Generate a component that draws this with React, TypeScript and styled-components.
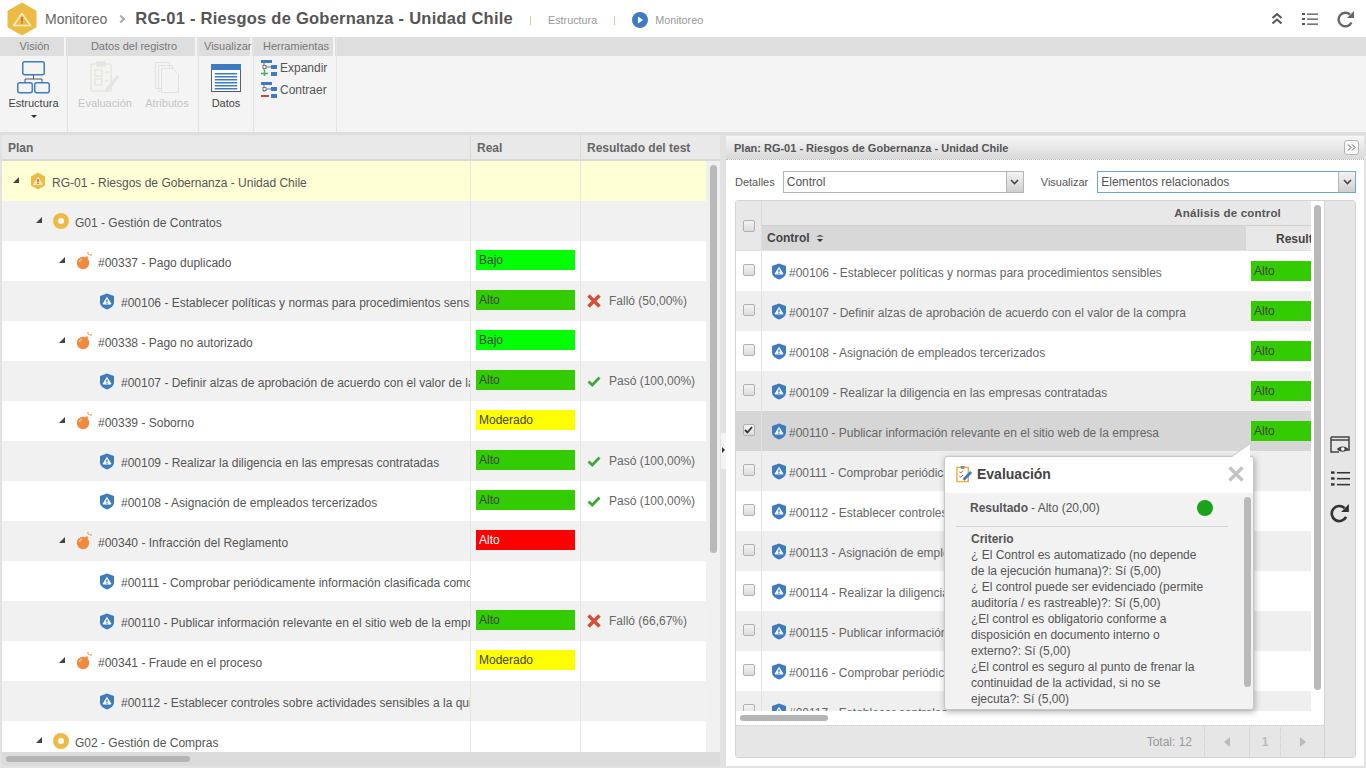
import styled, { createGlobalStyle } from 'styled-components';

const GlobalStyle = createGlobalStyle`
  html, body { margin: 0; padding: 0; }
  body {
    font-family: "Liberation Sans", Arial, sans-serif;
    font-size: 12px;
    color: #555;
    background: #fff;
  }
  * { box-sizing: border-box; }
`;

const Page = styled.div`
  width: 1366px;
  height: 768px;
  overflow: hidden;
  display: flex;
  flex-direction: column;
  position: relative;
`;

/* header */
const Header = styled.div`
  height: 37px;
  flex: none;
  display: flex;
  align-items: center;
  padding-left: 7px;
  background: #fff;
`;

const Crumb = styled.span`
  margin-left: 8px;
  font-size: 14px;
  color: #666;
`;

const Chevron = styled.span`
  margin: 0 11px 0 11px;
  width: 6px;
  height: 6px;
  border-top: 2px solid #aaa;
  border-right: 2px solid #aaa;
  transform: rotate(45deg);
`;

const Title = styled.h1`
  margin: 0;
  font-size: 16.5px;
  font-weight: 700;
  color: #555;
  letter-spacing: 0.25px;
`;

const Divider = styled.span`
  width: 1px;
  height: 9px;
  margin: 3px 0 0 17px;
  background: #d8c8a0;
`;

const StepLabel = styled.span`
  margin: 2px 0 0 17px;
  font-size: 10.8px;
  color: #999;
`;

const StepIcon = styled.svg`
  margin: 2px -10px 0 17px;
`;

const HeaderTools = styled.div`
  margin-left: auto;
  display: flex;
  align-items: center;
  gap: 19px;
  padding-right: 11px;
`;

/* ribbon */
const Ribbon = styled.div`
  height: 98px;
  flex: none;
  display: flex;
  background: linear-gradient(#dedede 0 19px, #f4f4f4 19px);
  border-bottom: 3px solid #dedede;
`;

const RibbonGroup = styled.div<{ $width: number }>`
  width: ${(p) => p.$width}px;
  flex: none;
  display: flex;
  flex-direction: column;
  border-right: 1px solid #e4e4e4;
`;

const GroupLabel = styled.div`
  height: 19px;
  margin-right: 1px;
  padding-left: 5px;
  line-height: 19px;
  font-size: 11px;
  text-align: center;
  color: #777;
  background: #dedede;
  border-right: 2px solid #f4f4f4;
  white-space: nowrap;
`;

const GroupBody = styled.div<{ $inset?: number }>`
  display: flex;
  flex: 1;
  padding-left: ${(p) => p.$inset ?? 0}px;
`;

const RibbonButton = styled.div<{ $disabled?: boolean }>`
  flex: 1;
  display: flex;
  flex-direction: column;
  align-items: center;
  padding-top: 4px;
  font-size: 11px;
  line-height: 14px;
  color: ${(p) => (p.$disabled ? '#c4c4c4' : '#444')};
`;

const ButtonIcon = styled.span`
  height: 35px;
  margin-bottom: 1px;
  display: flex;
  align-items: center;
  justify-content: center;
`;

const Caret = styled.span`
  margin-top: 5px;
  border-left: 3px solid transparent;
  border-right: 3px solid transparent;
  border-top: 3px solid #333;
`;

const ToolList = styled.div`
  display: flex;
  flex-direction: column;
  gap: 6px;
  padding: 4px 0 0 7px;
`;

const ToolItem = styled.div`
  display: flex;
  align-items: center;
  gap: 3px;
  height: 16px;
  font-size: 12px;
  color: #555;
`;

/* main area */
const Main = styled.div`
  flex: 1;
  min-height: 0;
  display: flex;
  background: #e2e2e2;
  padding: 0 2px 2px;
`;

const LeftPanel = styled.section`
  width: 718px;
  flex: none;
  display: flex;
  flex-direction: column;
  background: #fff;
  position: relative;
  overflow: hidden;
`;

const PlanHead = styled.div`
  height: 26px;
  flex: none;
  display: grid;
  grid-template-columns: 468px 110px 1fr;
  background: #e9e9e9;
  border-bottom: 2px solid #d8d8d8;
  font-weight: 700;
  color: #666;
  line-height: 26px;
`;

const HeadCell = styled.div`
  padding-left: 6px;
  border-left: 1px solid #dcdcdc;
  &:first-child { border-left: 0; }
`;

const PlanBody = styled.div`
  flex: 1;
  min-height: 0;
  display: flex;
  overflow: hidden;
`;

const PlanRows = styled.div`
  width: 704px;
  flex: none;
`;

const PlanRow = styled.div<{ $tone: 'root' | 'odd' | 'even' }>`
  height: 40px;
  display: grid;
  grid-template-columns: 468px 110px 1fr;
  background: ${(p) => (p.$tone === 'root' ? '#ffffd5' : p.$tone === 'odd' ? '#f1f1f1' : '#fff')};
`;

const TreeCell = styled.div<{ $level: number }>`
  display: flex;
  align-items: center;
  overflow: hidden;
  white-space: nowrap;
  padding-left: ${(p) => 11 + p.$level * 23}px;
  padding-top: 3px;
`;

const Toggle = styled.span<{ $leaf?: boolean }>`
  width: 17px;
  flex: none;
  height: 6px;
  margin-top: -5px;
  visibility: ${(p) => (p.$leaf ? 'hidden' : 'visible')};
  &::before {
    content: '';
    display: block;
    width: 0;
    height: 0;
    border-bottom: 6px solid #444;
    border-left: 6px solid transparent;
  }
`;

const NodeIcon = styled.span`
  width: 16px;
  flex: none;
  margin-right: 6px;
  display: flex;
  justify-content: center;
  margin-top: -3px;
`;

const RealCell = styled.div`
  border-left: 1px solid #e6e6e6;
  padding: 0 5px 2px;
  display: flex;
  align-items: center;
`;

const Level = styled.div<{ $color: string; $light?: boolean }>`
  width: 99px;
  height: 20px;
  padding-left: 3px;
  line-height: 20px;
  background: ${(p) => p.$color};
  color: ${(p) => (p.$light ? '#fff' : '#444')};
`;

const TestCell = styled.div`
  border-left: 1px solid #e6e6e6;
  display: flex;
  align-items: center;
  gap: 8px;
  padding-left: 6px;
  white-space: nowrap;
  color: #666;
`;

const Track = styled.div`
  flex: 1;
  background: #f0f0f0;
  padding: 4px 2px 0;
`;

const VThumb = styled.div<{ $height: number }>`
  width: 7px;
  height: ${(p) => p.$height}px;
  margin: 0 auto;
  border-radius: 4px;
  background: #b9b9b9;
`;

const HTrack = styled.div`
  height: 14px;
  flex: none;
  background: #dcdcdc;
  padding: 4px 4px;
`;

const HThumb = styled.div<{ $width: number }>`
  width: ${(p) => p.$width}px;
  height: 6px;
  border-radius: 3px;
  background: #b4b4b4;
`;

const Splitter = styled.div`
  width: 6px;
  flex: none;
  position: relative;
`;

const SplitHandle = styled.div`
  position: absolute;
  left: 1px;
  top: 298px;
  width: 5px;
  height: 36px;
  background: #f4f4f4;
  &::after {
    content: '';
    position: absolute;
    left: 1px;
    top: 14px;
    border-left: 3px solid #333;
    border-top: 3px solid transparent;
    border-bottom: 3px solid transparent;
  }
`;

const RightPanel = styled.section`
  flex: 1;
  display: flex;
  flex-direction: column;
  background: #fff;
  margin-top: 1px;
`;

const PanelTitle = styled.div`
  height: 24px;
  flex: none;
  display: flex;
  align-items: center;
  justify-content: space-between;
  padding: 0 5px 0 8px;
  font-size: 11px;
  font-weight: 700;
  color: #555;
  background: linear-gradient(#f6f6f6, #d9d9d9);
  border-bottom: 1px dotted #bbb;
`;

const CollapseBtn = styled.span`
  width: 15px;
  height: 15px;
  border: 1px solid #b5b5b5;
  border-radius: 3px;
  background: #fafafa;
  display: flex;
  align-items: center;
  justify-content: center;
`;

const Filters = styled.div`
  height: 40px;
  flex: none;
  display: flex;
  align-items: center;
  padding: 3px 0 0 9px;
  font-size: 11px;
  color: #555;
`;

const Select = styled.div<{ $width: number; $focus?: boolean }>`
  width: ${(p) => p.$width}px;
  height: 22px;
  margin-left: ${(p) => (p.$focus ? 9 : 8)}px;
  margin-right: ${(p) => (p.$focus ? 0 : 17)}px;
  display: flex;
  border: 1px solid ${(p) => (p.$focus ? '#6aa9d0' : '#b5b5b5')};
  font-size: 12px;
  color: #555;
`;

const SelectValue = styled.span`
  flex: 1;
  padding-left: 3px;
  line-height: 20px;
`;

const SelectArrow = styled.span`
  width: 17px;
  flex: none;
  border-left: 1px solid #b5b5b5;
  background: linear-gradient(#f4f4f4, #cfcfcf);
  display: flex;
  align-items: center;
  justify-content: center;
`;

const GridBox = styled.div`
  flex: 1;
  min-height: 0;
  margin: 0 8px 8px 9px;
  display: flex;
  border: 1px solid #d4d4d4;
  border-radius: 3px;
  overflow: hidden;
  position: relative;
`;

const GridMain = styled.div`
  width: 588px;
  flex: none;
  display: flex;
  flex-direction: column;
`;

const GridScrollArea = styled.div`
  flex: 1;
  min-height: 0;
  display: flex;
  overflow: hidden;
`;

const GridTable = styled.div`
  width: 575px;
  flex: none;
  overflow: hidden;
`;

const GridHead = styled.div`
  height: 50px;
  display: grid;
  grid-template-columns: 26px 1fr;
  background: #e8e8e8;
  border-bottom: 1px solid #e2e2e2;
`;

const HeadCheck = styled.div`
  display: flex;
  align-items: center;
  justify-content: center;
  border-right: 1px solid #dcdcdc;
`;

const GroupHead = styled.div`
  height: 24px;
  padding: 1px 53px 0 0;
  line-height: 22px;
  text-align: right;
  font-size: 11.5px;
  font-weight: 700;
  color: #555;
  letter-spacing: 0.2px;
`;

const ColumnHead = styled.div`
  height: 25px;
  display: flex;
  line-height: 26px;
  font-weight: 700;
  color: #444;
  background: #d8d8d8;
  border-top: 1px dotted #c8c8c8;
`;

const ControlHead = styled.div`
  width: 484px;
  padding-left: 5px;
  display: flex;
  align-items: center;
  gap: 6px;
`;

const ResultHead = styled.div`
  flex: 1;
  padding-left: 30px;
  background: #e8e8e8;
  overflow: hidden;
  white-space: nowrap;
`;

const GridRow = styled.div<{ $tone: 'even' | 'odd' | 'selected' }>`
  height: 40px;
  display: grid;
  grid-template-columns: 26px 484px 1fr;
  background: ${(p) => (p.$tone === 'selected' ? '#d6d6d6' : p.$tone === 'odd' ? '#efefef' : '#fff')};
`;

const CheckCell = styled.div`
  display: flex;
  align-items: center;
  justify-content: center;
  border-right: 1px solid #e2e2e2;
  padding-bottom: 3px;
`;

const CheckBox = styled.span`
  width: 12px;
  height: 12px;
  border: 1px solid #b0b0b0;
  border-radius: 2px;
  background: linear-gradient(#f4f4f4, #dcdcdc);
  display: flex;
  align-items: center;
  justify-content: center;
`;

const ControlCell = styled.div`
  display: flex;
  align-items: center;
  gap: 2px;
  padding: 3px 0 0 9px;
  white-space: nowrap;
  overflow: hidden;
  color: #666;
  svg { margin-top: -3px; }
`;

const ResultCell = styled.div`
  padding-top: 10px;
`;

const ResultBadge = styled.div`
  height: 20px;
  margin-left: 5px;
  padding-left: 3px;
  line-height: 20px;
  background: #33cc00;
  color: #444;
`;

const GridVTrack = styled.div`
  flex: 1;
  padding-top: 4px;
  display: flex;
  justify-content: center;
`;

const GridHTrack = styled.div`
  height: 14px;
  flex: none;
  padding: 4px 4px;
  background: #fff;
`;

const Footer = styled.div`
  height: 32px;
  flex: none;
  display: flex;
  align-items: center;
  justify-content: flex-end;
  background: #e6e6e6;
  border-top: 1px dotted #ccc;
  color: #999;
`;

const TotalText = styled.span`
  margin-right: 12px;
`;

const PagerCell = styled.span<{ $width: number }>`
  width: ${(p) => p.$width}px;
  height: 100%;
  display: flex;
  align-items: center;
  justify-content: center;
  border-left: 1px dotted #ccc;
  font-weight: 700;
  color: #bbb;
`;

const SideTools = styled.div`
  flex: 1;
  background: #e6e6e6;
  border-left: 1px solid #d4d4d4;
  display: flex;
  flex-direction: column;
  align-items: center;
  justify-content: flex-start;
  gap: 15px;
  padding-top: 235px;
`;

/* popover */
const Popover = styled.div`
  position: absolute;
  left: 208px;
  top: 255px;
  width: 310px;
  height: 254px;
  display: flex;
  flex-direction: column;
  background: #f2f2f2;
  border: 1px solid #c8c8c8;
  border-radius: 3px;
  box-shadow: 1px 2px 6px rgba(0, 0, 0, 0.3);
  &::before {
    content: '';
    position: absolute;
    right: 3px;
    top: -13px;
    width: 0;
    height: 0;
    border-bottom: 13px solid #fff;
    border-left: 18px solid transparent;
    filter: drop-shadow(0 -1px 0 #c4c4c4);
  }
`;

const PopoverHead = styled.div`
  height: 36px;
  flex: none;
  display: flex;
  align-items: center;
  gap: 4px;
  padding: 0 9px 2px 11px;
  background: #fff;
  border-radius: 3px 3px 0 0;
  font-size: 14px;
  font-weight: 700;
  color: #444;
`;

const PopoverClose = styled.svg`
  margin-left: auto;
`;

const PopoverBody = styled.div`
  flex: 1;
  min-height: 0;
  display: flex;
  overflow: hidden;
`;

const PopoverContent = styled.div`
  width: 296px;
  flex: none;
  padding-left: 11px;
`;

const ResultLine = styled.div`
  height: 34px;
  margin-right: 13px;
  display: flex;
  align-items: center;
  padding: 0 15px 4px 14px;
  border-bottom: 1px solid #d6d6d6;
  strong { font-weight: 700; margin-right: 3px; }
`;

const ResultDot = styled.span`
  width: 16px;
  height: 16px;
  margin-left: auto;
  border-radius: 50%;
  background: #1ba21b;
`;

const Criteria = styled.div`
  width: 251px;
  padding: 4px 0 0 15px;
  line-height: 16px;
  strong { display: block; font-weight: 700; }
`;

const PopoverTrack = styled.div`
  flex: 1;
  padding-top: 4px;
  display: flex;
  justify-content: center;
`;

/* icons */
const Shield = () => (
  <svg width="16" height="17" viewBox="0 0 16 17">
    <path d="M8 .5 15 3v6.500c0 3-3 5.700-7 7-4-1.300-7-4-7-7V3z" fill="#3f7cbf" />
    <path d="M8 4.500 12 11H4z" fill="#fff" stroke="#fff" strokeLinejoin="round" />
    <rect x="7.300" y="6.500" width="1.400" height="2.500" fill="#3f7cbf" />
    <rect x="7.300" y="9.500" width="1.400" height="1.300" fill="#3f7cbf" />
  </svg>
);

const Bomb = () => (
  <svg width="16" height="18" viewBox="0 0 16 18">
    <circle cx="7" cy="11" r="6.200" fill="#f28a3c" />
    <path d="M3.500 10a3.500 3.500 0 0 1 2.500-3" stroke="#fbd0a8" strokeWidth="1.200" fill="none" />
    <path d="M9.500 5.500 11 4l1.500 1.500L11 7z" fill="#f28a3c" />
    <path d="M12 0v2M14 3h2M12.500 3 13.500 2" stroke="#f28a3c" strokeWidth="1" />
  </svg>
);

const GroupIcon = () => (
  <svg width="16" height="16" viewBox="0 0 16 16">
    <circle cx="8" cy="8" r="5.500" fill="#fff" stroke="#ecbb44" strokeWidth="5" />
  </svg>
);

const RiskIcon = () => (
  <svg width="16" height="18" viewBox="0 0 16 18">
    <path d="M8 .5 15 4.500v9L8 17.500 1 13.500v-9z" fill="#ecbb44" />
    <path d="M8 5 12.500 12.500h-9z" fill="#f8e4b4" stroke="#f8e4b4" strokeLinejoin="round" />
    <rect x="7.300" y="7" width="1.400" height="3" fill="#c0563c" />
    <rect x="7.300" y="10.700" width="1.400" height="1.300" fill="#c0563c" />
  </svg>
);

const LogoHex = () => (
  <svg width="30" height="34" viewBox="0 0 30 34">
    <path d="M15 1 29 9v16l-14 8-14-8V9z" fill="#ecbb44" stroke="#ecbb44" strokeLinejoin="round" />
    <path d="M15 11.500 23.500 23.500H6.500z" fill="none" stroke="#fbeecb" strokeWidth="1.500" strokeLinejoin="round" />
    <rect x="14.300" y="15" width="1.400" height="4.500" fill="#c0563c" />
    <rect x="14.300" y="20.300" width="1.400" height="1.400" fill="#c0563c" />
  </svg>
);

const Cross = () => (
  <svg width="14" height="14" viewBox="0 0 14 14">
    <path d="M1.500 1.500 12.500 12.500M12.500 1.500 1.500 12.500" stroke="#d0533c" strokeWidth="3.600" />
  </svg>
);

const Tick = () => (
  <svg width="14" height="14" viewBox="0 0 14 14">
    <path d="M1.500 7.500 5.300 11 12.500 3.500" stroke="#44a53c" strokeWidth="2.800" fill="none" />
  </svg>
);

const StructureIcon = () => (
  <svg width="33" height="33" viewBox="0 0 33 33" fill="none" stroke="#3f7cbf" strokeWidth="1.500">
    <rect x="5.750" y=".75" width="21.500" height="13" rx="2" />
    <rect x=".75" y="21.750" width="14.500" height="10" rx="2" />
    <rect x="17.750" y="21.750" width="14.500" height="10" rx="2" />
    <path d="M16.500 14v4M8 21.500V18h17v3.500" stroke="#555" strokeWidth="1" />
  </svg>
);

const EvalIcon = () => (
  <svg width="32" height="33" viewBox="0 0 32 33" fill="none" stroke="#e6e6e0" strokeWidth="1.500">
    <rect x="2" y="3" width="20" height="27" rx="1" />
    <rect x="8" y="1" width="8" height="4" fill="#e6e6e0" />
    <path d="M6 9h7v6H6zM6 18h7v6H6zM16 11h4M16 20h3" />
    <path d="M17 30 29 15" strokeWidth="3.500" />
  </svg>
);

const AttrIcon = () => (
  <svg width="26" height="33" viewBox="0 0 26 33" fill="none" stroke="#e2e2e2" strokeWidth="1">
    <path d="M1.500 1.500h14v26h-14zM4.500 4.500h14v26h-14z" fill="#f4f4f4" />
    <path d="M7.500 7.500h11l6 6v18h-17z" fill="#f4f4f4" />
  </svg>
);

const DataIcon = () => (
  <svg width="30" height="28" viewBox="0 0 32 28" preserveAspectRatio="none">
    <rect x=".5" y=".5" width="31" height="27" fill="#fff" stroke="#555" />
    <rect x="0" y="0" width="32" height="6" fill="#3f7cbf" />
    {[9, 12, 15, 18, 21, 24].map((y) => (
      <rect key={y} x="4" y={y} width="24" height="1.500" fill="#3f7cbf" />
    ))}
  </svg>
);

const TreeTool = ({ mark }: { mark: 'plus' | 'minus' }) => (
  <svg width="16" height="16" viewBox="0 0 16 16">
    <rect x="0" y="0" width="11" height="3" fill="#3f7cbf" />
    <rect x="10" y="5" width="6" height="4" fill="#3f7cbf" />
    <rect x="10" y="12" width="6" height="4" fill="#3f7cbf" />
    <path d="M3 3v7M3 7h7" stroke="#777" fill="none" />
    <rect x="2" y="5.500" width="3" height="3" fill="#fff" stroke="#777" />
    {mark === 'plus' ? (
      <path d="M0 13.500h7M3.500 10v6" stroke="#44b060" strokeWidth="1.500" />
    ) : (
      <path d="M0 14h8" stroke="#c0483c" strokeWidth="2" />
    )}
  </svg>
);

const UpIcon = () => (
  <svg width="12" height="13" viewBox="0 0 12 13" fill="none" stroke="#555" strokeWidth="2">
    <path d="M1.500 6 6 2l4.500 4M1.500 11.500 6 7.500l4.500 4" />
  </svg>
);

const ListIcon = ({ size = 16, color = '#555' }: { size?: number; color?: string }) => (
  <svg width={size} height={size} viewBox="0 0 16 16" fill={color}>
    <rect x="0" y="2" width="3" height="2" />
    <rect x="5" y="2.500" width="11" height="1.300" />
    <rect x="0" y="7" width="3" height="2" />
    <rect x="5" y="7.500" width="11" height="1.300" />
    <rect x="0" y="12" width="3" height="2" />
    <rect x="5" y="12.500" width="11" height="1.300" />
  </svg>
);

const RefreshIcon = ({ size = 18, color = '#666' }: { size?: number; color?: string }) => (
  <svg width={size} height={size} viewBox="0 0 18 18" fill="none">
    <path d="M14.500 12.500A6.800 6.800 0 1 1 13 4.500" stroke={color} strokeWidth="2.400" />
    <path d="M10 8h7V1z" fill={color} />
  </svg>
);

const PreviewIcon = () => (
  <svg width="20" height="18" viewBox="0 0 20 18" fill="none" stroke="#444">
    <path d="M1 1h18v13h-6M1 1v15h8" strokeWidth="1.500" />
    <path d="M1 4h18" strokeWidth="1.500" />
    <path d="M7 13c2-3.500 9-3.500 11.500 0-2.500 3.500-9.500 3.500-11.500 0z" fill="#444" stroke="none" />
    <circle cx="12.800" cy="13" r="1.800" fill="#fff" stroke="none" />
  </svg>
);

const PopoverEvalIcon = () => (
  <svg width="17" height="18" viewBox="0 0 18 18">
    <rect x="1" y="2" width="12" height="15" fill="#fff" stroke="#e8b040" strokeWidth="1.500" />
    <rect x="5" y="0.500" width="4" height="3" fill="#888" />
    <path d="M3.500 6.500 5 8l2.500-2.500M3.500 11 5 12.500l2.500-2.500" stroke="#c0483c" fill="none" />
    <path d="M8 15 16 7" stroke="#3f7cbf" strokeWidth="3" />
  </svg>
);

const DownChevron = () => (
  <svg width="9" height="6" viewBox="0 0 9 6" fill="none" stroke="#444" strokeWidth="1.600">
    <path d="M1 1 4.500 4.500 8 1" />
  </svg>
);

type PlanEntry = {
  level: number;
  kind: 'risk' | 'group' | 'bomb' | 'shield';
  text: string;
  real?: { label: string; color: string; light?: boolean };
  test?: { ok: boolean; label: string };
};

const BAJO = { label: 'Bajo', color: '#00ff00' };
const ALTO = { label: 'Alto', color: '#33cc00' };
const MODERADO = { label: 'Moderado', color: '#ffff00' };
const CRITICO = { label: 'Alto', color: '#ff0000', light: true };

const planEntries: PlanEntry[] = [
  { level: 0, kind: 'risk', text: 'RG-01 - Riesgos de Gobernanza - Unidad Chile' },
  { level: 1, kind: 'group', text: 'G01 - Gestión de Contratos' },
  { level: 2, kind: 'bomb', text: '#00337 - Pago duplicado', real: BAJO },
  { level: 3, kind: 'shield', text: '#00106 - Establecer políticas y normas para procedimientos sensibles', real: ALTO, test: { ok: false, label: 'Falló (50,00%)' } },
  { level: 2, kind: 'bomb', text: '#00338 - Pago no autorizado', real: BAJO },
  { level: 3, kind: 'shield', text: '#00107 - Definir alzas de aprobación de acuerdo con el valor de la compra', real: ALTO, test: { ok: true, label: 'Pasó (100,00%)' } },
  { level: 2, kind: 'bomb', text: '#00339 - Soborno', real: MODERADO },
  { level: 3, kind: 'shield', text: '#00109 - Realizar la diligencia en las empresas contratadas', real: ALTO, test: { ok: true, label: 'Pasó (100,00%)' } },
  { level: 3, kind: 'shield', text: '#00108 - Asignación de empleados tercerizados', real: ALTO, test: { ok: true, label: 'Pasó (100,00%)' } },
  { level: 2, kind: 'bomb', text: '#00340 - Infracción del Reglamento', real: CRITICO },
  { level: 3, kind: 'shield', text: '#00111 - Comprobar periódicamente información clasificada como confidencial' },
  { level: 3, kind: 'shield', text: '#00110 - Publicar información relevante en el sitio web de la empresa', real: ALTO, test: { ok: false, label: 'Falló (66,67%)' } },
  { level: 2, kind: 'bomb', text: '#00341 - Fraude en el proceso', real: MODERADO },
  { level: 3, kind: 'shield', text: '#00112 - Establecer controles sobre actividades sensibles a la quiebra' },
  { level: 1, kind: 'group', text: 'G02 - Gestión de Compras' },
];

const controls = [
  '#00106 - Establecer políticas y normas para procedimientos sensibles',
  '#00107 - Definir alzas de aprobación de acuerdo con el valor de la compra',
  '#00108 - Asignación de empleados tercerizados',
  '#00109 - Realizar la diligencia en las empresas contratadas',
  '#00110 - Publicar información relevante en el sitio web de la empresa',
  '#00111 - Comprobar periódicamente',
  '#00112 - Establecer controles',
  '#00113 - Asignación de empleados',
  '#00114 - Realizar la diligencia',
  '#00115 - Publicar información',
  '#00116 - Comprobar periódicamente',
  '#00117 - Establecer controles',
];

const nodeIcons = {
  risk: <RiskIcon />,
  group: <GroupIcon />,
  bomb: <Bomb />,
  shield: <Shield />,
};

const App = () => {
  return (
    <Page>
      <GlobalStyle />
      <Header>
        <LogoHex />
        <Crumb>Monitoreo</Crumb>
        <Chevron />
        <Title>RG-01 - Riesgos de Gobernanza - Unidad Chile</Title>
        <Divider />
        <StepLabel>Estructura</StepLabel>
        <Divider />
        <StepIcon width="16" height="16" viewBox="0 0 16 16">
          <circle cx="8" cy="8" r="8" fill="#3f7cbf" />
          <path d="M6 4.500 11 8l-5 3.500z" fill="#fff" />
        </StepIcon>
        <StepLabel>Monitoreo</StepLabel>
        <HeaderTools>
          <UpIcon />
          <ListIcon />
          <RefreshIcon />
        </HeaderTools>
      </Header>

      <Ribbon>
        <RibbonGroup $width={68}>
          <GroupLabel>Visión</GroupLabel>
          <GroupBody>
            <RibbonButton>
              <ButtonIcon>
                <StructureIcon />
              </ButtonIcon>
              Estructura
              <Caret />
            </RibbonButton>
          </GroupBody>
        </RibbonGroup>
        <RibbonGroup $width={131}>
          <GroupLabel>Datos del registro</GroupLabel>
          <GroupBody $inset={6}>
            <RibbonButton $disabled>
              <ButtonIcon>
                <EvalIcon />
              </ButtonIcon>
              Evaluación
            </RibbonButton>
            <RibbonButton $disabled>
              <ButtonIcon>
                <AttrIcon />
              </ButtonIcon>
              Atributos
            </RibbonButton>
          </GroupBody>
        </RibbonGroup>
        <RibbonGroup $width={55}>
          <GroupLabel>Visualizar</GroupLabel>
          <GroupBody>
            <RibbonButton>
              <ButtonIcon>
                <DataIcon />
              </ButtonIcon>
              Datos
            </RibbonButton>
          </GroupBody>
        </RibbonGroup>
        <RibbonGroup $width={83}>
          <GroupLabel>Herramientas</GroupLabel>
          <ToolList>
            <ToolItem>
              <TreeTool mark="plus" />
              Expandir
            </ToolItem>
            <ToolItem>
              <TreeTool mark="minus" />
              Contraer
            </ToolItem>
          </ToolList>
        </RibbonGroup>
      </Ribbon>

      <Main>
        <LeftPanel>
          <PlanHead>
            <HeadCell>Plan</HeadCell>
            <HeadCell>Real</HeadCell>
            <HeadCell>Resultado del test</HeadCell>
          </PlanHead>
          <PlanBody>
            <PlanRows>
              {planEntries.map((entry, i) => (
                <PlanRow key={entry.text} $tone={i === 0 ? 'root' : i % 2 ? 'odd' : 'even'}>
                  <TreeCell $level={entry.level}>
                    <Toggle $leaf={entry.kind === 'shield'} />
                    <NodeIcon>{nodeIcons[entry.kind]}</NodeIcon>
                    {entry.text}
                  </TreeCell>
                  <RealCell>
                    {entry.real && (
                      <Level $color={entry.real.color} $light={entry.real.light}>
                        {entry.real.label}
                      </Level>
                    )}
                  </RealCell>
                  <TestCell>
                    {entry.test && (
                      <>
                        {entry.test.ok ? <Tick /> : <Cross />}
                        {entry.test.label}
                      </>
                    )}
                  </TestCell>
                </PlanRow>
              ))}
            </PlanRows>
            <Track>
              <VThumb $height={388} />
            </Track>
          </PlanBody>
          <HTrack>
            <HThumb $width={184} />
          </HTrack>
        </LeftPanel>

        <Splitter>
          <SplitHandle />
        </Splitter>

        <RightPanel>
          <PanelTitle>
            Plan: RG-01 - Riesgos de Gobernanza - Unidad Chile
            <CollapseBtn>
              <svg width="9" height="7" viewBox="0 0 9 7" fill="none" stroke="#555">
                <path d="M1 .5 4 3.500 1 6.500M5 .5 8 3.500 5 6.500" />
              </svg>
            </CollapseBtn>
          </PanelTitle>
          <Filters>
            Detalles
            <Select $width={241}>
              <SelectValue>Control</SelectValue>
              <SelectArrow>
                <DownChevron />
              </SelectArrow>
            </Select>
            Visualizar
            <Select $width={259} $focus>
              <SelectValue>Elementos relacionados</SelectValue>
              <SelectArrow>
                <DownChevron />
              </SelectArrow>
            </Select>
          </Filters>
          <GridBox>
            <GridMain>
              <GridScrollArea>
                <GridTable>
                  <GridHead>
                    <HeadCheck>
                      <CheckBox />
                    </HeadCheck>
                    <div>
                      <GroupHead>Análisis de control</GroupHead>
                      <ColumnHead>
                        <ControlHead>
                          Control
                          <svg width="8" height="7" viewBox="0 0 8 7" fill="#333">
                            <path d="M0 1.500h8L4 0zM1 4h6L4 7z" />
                          </svg>
                        </ControlHead>
                        <ResultHead>Resultado</ResultHead>
                      </ColumnHead>
                    </div>
                  </GridHead>
                  {controls.map((text, i) => (
                    <GridRow key={text} $tone={i === 4 ? 'selected' : i % 2 ? 'odd' : 'even'}>
                      <CheckCell>
                        <CheckBox>
                          {i === 4 && (
                            <svg width="9" height="8" viewBox="0 0 9 8" fill="none" stroke="#333" strokeWidth="1.800">
                              <path d="M1 4 3.500 6.500 8 1" />
                            </svg>
                          )}
                        </CheckBox>
                      </CheckCell>
                      <ControlCell>
                        <Shield />
                        {text}
                      </ControlCell>
                      <ResultCell>{i < 5 && <ResultBadge>Alto</ResultBadge>}</ResultCell>
                    </GridRow>
                  ))}
                </GridTable>
                <GridVTrack>
                  <VThumb $height={485} />
                </GridVTrack>
              </GridScrollArea>
              <GridHTrack>
                <HThumb $width={88} />
              </GridHTrack>
              <Footer>
                <TotalText>Total: 12</TotalText>
                <PagerCell $width={45}>
                  <svg width="6" height="10" viewBox="0 0 6 10" fill="#bbb">
                    <path d="M6 0v10L0 5z" />
                  </svg>
                </PagerCell>
                <PagerCell $width={31}>1</PagerCell>
                <PagerCell $width={44}>
                  <svg width="6" height="10" viewBox="0 0 6 10" fill="#bbb">
                    <path d="M0 0v10l6-5z" />
                  </svg>
                </PagerCell>
              </Footer>
            </GridMain>
            <SideTools>
              <PreviewIcon />
              <ListIcon size={19} color="#333" />
              <RefreshIcon size={20} color="#333" />
            </SideTools>
            <Popover>
              <PopoverHead>
                <PopoverEvalIcon />
                Evaluación
                <PopoverClose width="16" height="16" viewBox="0 0 16 16">
                  <path d="M1.500 1.500 14.500 14.500M14.500 1.500 1.500 14.500" stroke="#c4c4c4" strokeWidth="3.400" />
                </PopoverClose>
              </PopoverHead>
              <PopoverBody>
                <PopoverContent>
                  <ResultLine>
                    <strong>Resultado</strong> - Alto (20,00)
                    <ResultDot />
                  </ResultLine>
                  <Criteria>
                    <strong>Criterio</strong>
                    ¿ El Control es automatizado (no depende de la ejecución humana)?: Sí (5,00)
                    <br />
                    ¿ El control puede ser evidenciado (permite auditoría / es rastreable)?: Sí (5,00)
                    <br />
                    ¿El control es obligatorio conforme a disposición en documento interno o externo?: Sí (5,00)
                    <br />
                    ¿El control es seguro al punto de frenar la continuidad de la actividad, si no se ejecuta?: Sí (5,00)
                  </Criteria>
                </PopoverContent>
                <PopoverTrack>
                  <VThumb $height={190} />
                </PopoverTrack>
              </PopoverBody>
            </Popover>
          </GridBox>
        </RightPanel>
      </Main>
    </Page>
  );
};

export default App;
